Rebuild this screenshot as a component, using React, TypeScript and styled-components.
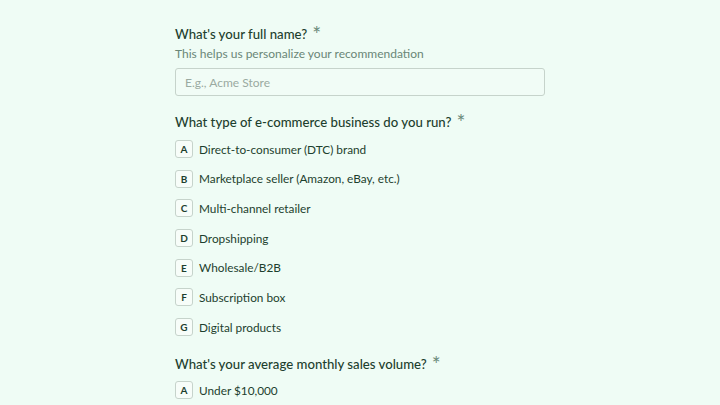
import styled, { createGlobalStyle } from "styled-components";

const GlobalStyle = createGlobalStyle`
     html, body {
          margin: 0;
          padding: 0;
          background: #effcf5;
     }
     body {
          font-family: Lato, "Noto Sans", sans-serif;
          color: #1d3f2e;
     }
`;

const Page = styled.div`
     min-height: 405px;
     background: #effcf5;
`;

const Form = styled.form`
     width: 370px;
     margin: 0 auto;
     padding-top: 24px;
     display: flex;
     flex-direction: column;
`;

const Question = styled.div<{ $first?: boolean }>`
     display: flex;
     flex-direction: column;
     margin-top: ${(p) => (p.$first ? "0" : "16px")};
`;

const Title = styled.h2`
     margin: 0;
     font-size: 13.2px;
     line-height: 20px;
     font-weight: 500;
     color: #1d3f2e;
`;

const Star = styled.span`
     font-size: 21px;
     line-height: 0;
     font-weight: 400;
     color: #6b8a7a;
     margin-left: 5px;
     position: relative;
     top: 3px;
`;

const Hint = styled.p`
     margin: 2px 0 0;
     font-size: 12px;
     line-height: 16px;
     color: #6a8677;
`;

const TextInput = styled.input`
     box-sizing: border-box;
     margin-top: 6px;
     width: 100%;
     height: 28px;
     padding: 0 9px;
     border: 1px solid #c6d3cb;
     border-radius: 3px;
     background: #f1fcf6;
     font-family: inherit;
     font-size: 12px;
     color: #1d3f2e;

     &::placeholder {
          color: #9aaaa1;
     }
`;

const Options = styled.div<{ $tight?: boolean }>`
     display: flex;
     flex-direction: column;
     gap: 7.7px;
     margin-top: ${(p) => (p.$tight ? "5px" : "6px")};
`;

const Option = styled.label`
     display: flex;
     align-items: center;
     gap: 6px;
     height: 22px;
     cursor: pointer;
`;

const Key = styled.span`
     box-sizing: border-box;
     width: 18px;
     height: 18px;
     display: flex;
     align-items: center;
     justify-content: center;
     border: 1px solid #c6d3cb;
     border-radius: 3px;
     background: #f7fdf9;
     font-size: 10px;
     font-weight: 700;
     color: #1d3f2e;
`;

const OptionText = styled.span`
     font-size: 11.8px;
     color: #1d3f2e;
`;

const businessTypes = [
     "Direct-to-consumer (DTC) brand",
     "Marketplace seller (Amazon, eBay, etc.)",
     "Multi-channel retailer",
     "Dropshipping",
     "Wholesale/B2B",
     "Subscription box",
     "Digital products",
];

const salesVolumes = ["Under $10,000"];

function Choices({ items, tight }: { items: string[]; tight?: boolean }) {
     return (
          <Options $tight={tight}>
               {items.map((item, i) => (
                    <Option key={item}>
                         <Key>{String.fromCharCode(65 + i)}</Key>
                         <OptionText>{item}</OptionText>
                    </Option>
               ))}
          </Options>
     );
}

export default function App() {
     return (
          <Page>
               <GlobalStyle />
               <Form onSubmit={(e) => e.preventDefault()}>
                    <Question $first>
                         <Title>
                              What's your full name?<Star>*</Star>
                         </Title>
                         <Hint>This helps us personalize your recommendation</Hint>
                         <TextInput placeholder="E.g., Acme Store" />
                    </Question>

                    <Question>
                         <Title>
                              What type of e-commerce business do you run?<Star>*</Star>
                         </Title>
                         <Choices items={businessTypes} />
                    </Question>

                    <Question>
                         <Title>
                              What's your average monthly sales volume?<Star>*</Star>
                         </Title>
                         <Choices items={salesVolumes} tight />
                    </Question>
               </Form>
          </Page>
     );
}
